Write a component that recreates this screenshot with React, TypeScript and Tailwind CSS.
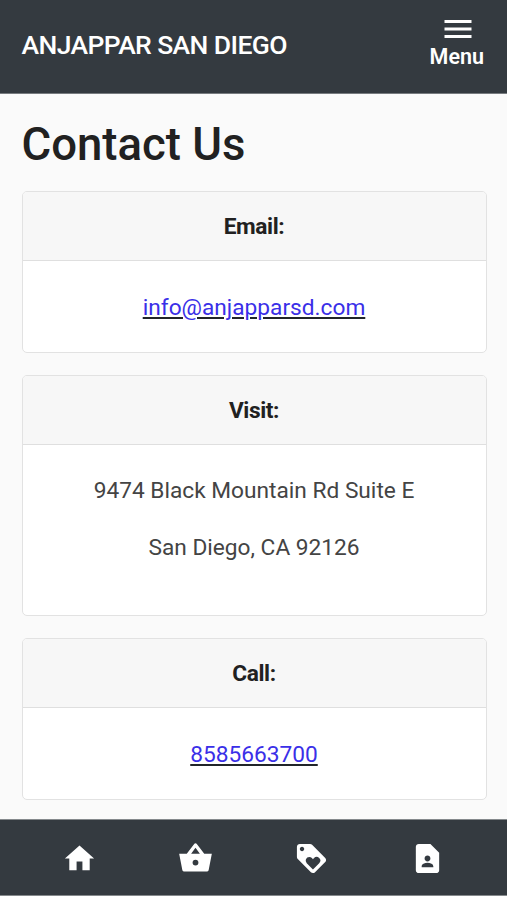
import type { ReactNode } from "react";
import {
  MdContactPage,
  MdHome,
  MdLoyalty,
  MdMenu,
} from "react-icons/md";

// Solid basket with square shoulders, used for the order tab.
function BasketIcon({ className }: { className?: string }) {
  return (
    <svg viewBox="0 0 24 24" fill="currentColor" className={className} aria-hidden="true">
      <path
        fillRule="evenodd"
        d="M.8 8.8H6L11.1 2a1.1 1.1 0 0 1 1.8 0L18 8.8h5.2L21 20.1a1 1 0 0 1-1 .8H4a1 1 0 0 1-1-.8ZM9 8.8h6L12 4.7ZM12 16.8a2 2 0 1 0 0-4 2 2 0 0 0 0 4Z"
      />
    </svg>
  );
}

const NAV_ITEMS = [
  { label: "Home", href: "#home", Icon: MdHome },
  { label: "Order", href: "#order", Icon: BasketIcon },
  { label: "Offers", href: "#offers", Icon: MdLoyalty },
  { label: "Contact", href: "#contact", Icon: MdContactPage },
];

function ContactCard({ title, children }: { title: string; children: ReactNode }) {
  return (
    <section className="overflow-hidden rounded-[5px] border border-[#e2e2e2] bg-white text-center">
      <h2 className="flex h-[69px] items-center justify-center border-b border-[#dfdfdf] bg-[#f7f7f7] pt-[2px] text-[22.7px] font-bold tracking-[-0.4px] text-[#212121]">
        {title}
      </h2>
      {children}
    </section>
  );
}

function ContactLink({ href, children }: { href: string; children: ReactNode }) {
  return (
    <p className="flex h-[91px] items-center justify-center pt-[3px] text-[22.7px]">
      <a
        href={href}
        className="text-[#3a2fe8] underline decoration-[#212529] decoration-2 underline-offset-2"
      >
        {children}
      </a>
    </p>
  );
}

export default function App() {
  return (
    <div className="flex h-[900px] flex-col bg-white font-[Roboto,sans-serif]">
      <header className="flex h-[94px] shrink-0 items-center justify-between border-b border-[#777b7f] bg-[#343a40] pr-[23px] pl-[21.5px] text-white">
        <span className="pb-[4px] text-[26.5px] font-medium tracking-[-0.6px]">
          ANJAPPAR SAN DIEGO
        </span>
        <button type="button" className="flex flex-col items-center pb-[12px]">
          <MdMenu className="ml-[2px] size-[36px]" />
          <span className="-mt-[4px] text-[21.5px] leading-[28px] font-semibold">Menu</span>
        </button>
      </header>

      <main className="flex-1 bg-[#fafafa] pt-[22px] pr-[20.5px] pl-[21.5px]">
        <h1 className="h-[75px] pt-px text-[45.5px] leading-[56px] font-medium text-[#212121]">
          Contact Us
        </h1>
        <div className="flex flex-col gap-[22px]">
          <ContactCard title="Email:">
            <ContactLink href="mailto:info@anjapparsd.com">info@anjapparsd.com</ContactLink>
          </ContactCard>
          <ContactCard title="Visit:">
            <div className="flex h-[170px] flex-col gap-[23px] pt-[29px] text-[22.7px] leading-[34px] text-[#444]">
              <p>9474 Black Mountain Rd Suite E</p>
              <p>San Diego, CA 92126</p>
            </div>
          </ContactCard>
          <ContactCard title="Call:">
            <ContactLink href="tel:8585663700">8585663700</ContactLink>
          </ContactCard>
        </div>
      </main>

      <nav className="mb-[4px] grid h-[77px] shrink-0 grid-cols-4 items-center border-y border-[#85898c] bg-[#343a40] pt-px pr-[21px] pl-[21px] text-white">
        {NAV_ITEMS.map(({ label, href, Icon }) => (
          <a key={label} href={href} aria-label={label} className="flex justify-center">
            <Icon className="size-[35px]" />
          </a>
        ))}
      </nav>
    </div>
  );
}
